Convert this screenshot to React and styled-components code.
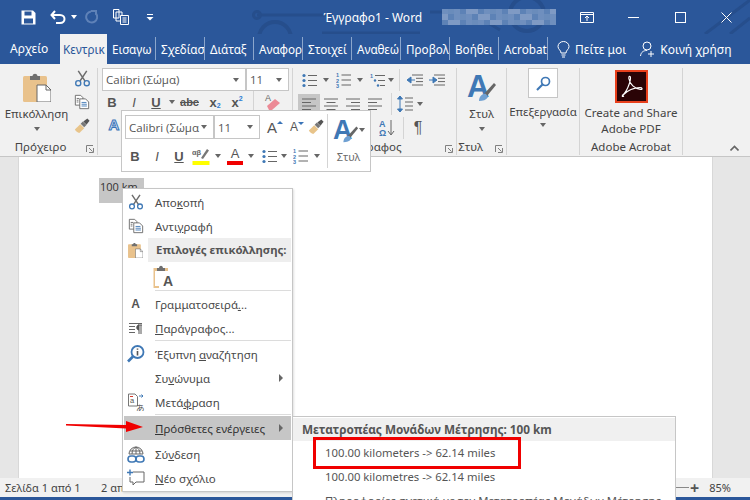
import styled, { createGlobalStyle } from 'styled-components';

const ui = `"Noto Sans", "Open Sans", "Liberation Sans", sans-serif`;
const calibri = `"Open Sans", "Liberation Sans", sans-serif`;

const Global = createGlobalStyle`
  html, body { margin: 0; padding: 0; background: #e6e6e6; }
  * { box-sizing: border-box; }
`;

const Window = styled.div`
  position: relative;
  width: 750px;
  height: 500px;
  overflow: hidden;
  display: flex;
  flex-direction: column;
  font-family: ${ui};
  font-size: 11.5px;
  color: #444;
  background: #e6e6e6;
`;

/* title bar */
const TitleBar = styled.div`
  position: relative;
  height: 34px;
  flex: none;
  display: flex;
  align-items: center;
  background: #2b579a;
  color: #fff;
`;
const QuickAccess = styled.div`
  display: flex;
  align-items: center;
  padding-left: 20px;
  width: 324px;
  position: relative;
`;
const QuickBtn = styled.span`
  display: flex;
  align-items: center;
  justify-content: center;
  width: ${p => p.$w}px;
  margin-left: ${p => p.$ml || 0}px;
`;
const DocTitle = styled.div`
  position: relative;
  width: 119px;
  font-size: 12px;
  white-space: nowrap;
`;
const Mosaic = styled.div`
  position: relative;
  display: grid;
  grid-template-columns: repeat(19, 6px);
  grid-auto-rows: 5.4px;
  width: 117px;
`;
const MosaicCell = styled.span`
  background: ${p => p.$c};
`;
const WindowButtons = styled.div`
  position: relative;
  margin-left: 5px;
  display: flex;
  align-items: center;
`;
const WinBtn = styled.span`
  width: 46.5px;
  display: flex;
  justify-content: center;
`;
const Circuit = styled.svg`
  position: absolute;
  left: 0;
  top: 0;
`;

/* tabs */
const TabBar = styled.div`
  position: relative;
  height: 30px;
  flex: none;
  display: flex;
  align-items: stretch;
  background: #2b579a;
`;
const FileTab = styled.div`
  width: 60px;
  padding-left: 10px;
  line-height: 30px;
  color: #fff;
  font-size: 12px;
`;
const Tab = styled.div`
  width: ${p => (p.$active ? 47 : 49)}px;
  padding-left: ${p => (p.$active ? 3 : 5)}px;
  white-space: nowrap;
  line-height: 30px;
  font-size: 11.7px;
  color: ${p => (p.$active ? '#2b579a' : '#fff')};
  background: ${p => (p.$active ? '#f1f1f1' : 'transparent')};
  position: relative;
  &::after {
    content: '';
    display: ${p => (p.$active ? 'none' : 'block')};
    position: absolute;
    right: 0;
    top: 3px;
    bottom: 4px;
    width: 1px;
    background: #8ba6cc;
  }
`;
const TellMe = styled.div`
  display: flex;
  align-items: center;
  gap: 5px;
  color: #fff;
  font-size: 12px;
  padding-left: ${p => p.$pl}px;
  white-space: nowrap;
`;

/* ribbon */
const Ribbon = styled.div`
  height: 93px;
  flex: none;
  display: flex;
  background: #f1f1f1;
  border-bottom: 1px solid #c6c6c6;
  padding-top: 4px;
`;
const Group = styled.div`
  position: relative;
  width: ${p => p.$w}px;
  flex: none;
  display: flex;
  flex-direction: column;
  border-right: ${p => (p.$plain ? 'none' : '1px solid #d4d4d4')};
  margin-bottom: 1px;
`;
const GroupBody = styled.div`
  height: 71px;
  display: flex;
  padding-left: ${p => p.$pl || 0}px;
`;
const GroupLabel = styled.div`
  position: relative;
  height: 16px;
  line-height: 16px;
  text-align: ${p => p.$align || 'center'};
  font-size: 11.5px;
  color: #444;
  padding-right: ${p => p.$pr || 0}px;
`;
const Launcher = styled.svg`
  position: absolute;
  right: 3px;
  top: 6px;
`;
const BigButton = styled.div`
  width: ${p => p.$w}px;
  display: flex;
  flex-direction: column;
  align-items: center;
  text-align: center;
  font-size: 11.5px;
  line-height: 16px;
  white-space: nowrap;
`;
const IconSlot = styled.div`
  height: ${p => p.$h}px;
  margin-top: ${p => p.$mt || 0}px;
  display: flex;
  align-items: center;
  justify-content: center;
`;
const Stack = styled.div`
  display: flex;
  flex-direction: column;
  margin: ${p => p.$m || 0};
`;
const Row = styled.div`
  display: flex;
  align-items: center;
  height: ${p => p.$h || 22}px;
  margin-top: ${p => p.$mt || 0}px;
`;
const Btn = styled.span`
  width: ${p => p.$w || 22}px;
  height: ${p => p.$h || 20}px;
  flex: none;
  display: flex;
  align-items: center;
  justify-content: center;
  background: ${p => (p.$on ? '#c6c6c6' : 'transparent')};
  margin-left: ${p => p.$ml || 0}px;
`;
const Fmt = styled.span`
  font-family: "Liberation Sans", sans-serif;
  font-size: ${p => p.$size || 13}px;
  font-weight: ${p => (p.$italic || p.$light ? 400 : 700)};
  font-style: ${p => (p.$italic ? 'italic' : 'normal')};
  text-decoration: ${p => (p.$under ? 'underline' : p.$strike ? 'line-through' : 'none')};
  color: #555;
`;
const Script = styled.span`
  font-size: 7px;
  color: #2b7cd3;
  font-weight: 700;
  margin-top: ${p => (p.$sup ? -7 : 7)}px;
  font-family: "Liberation Sans", sans-serif;
`;
const Caret = styled.span`
  display: inline-block;
  flex: none;
  width: 0;
  height: 0;
  border-left: 3.5px solid transparent;
  border-right: 3.5px solid transparent;
  border-top: 4px solid ${p => p.$color || '#666'};
  margin-left: ${p => p.$ml || 0}px;
`;
const VRule = styled.span`
  width: 1px;
  height: ${p => p.$h || 22}px;
  background: #d4d4d4;
  flex: none;
  margin: 0 ${p => p.$m || 4}px;
`;
const Combo = styled.div`
  width: ${p => p.$w}px;
  height: ${p => p.$h || 23}px;
  flex: none;
  background: #fff;
  border: 1px solid #c6c6c6;
  display: flex;
  align-items: center;
  justify-content: space-between;
  padding: 0 6px 0 3px;
  font-family: ${calibri};
  font-size: 11.5px;
  color: #555;
  white-space: nowrap;
  overflow: hidden;
  margin-left: ${p => p.$ml || 0}px;
`;
const SearchBox = styled.div`
  width: 30px;
  height: 30px;
  background: #fff;
  border: 1px solid #c6c6c6;
  display: flex;
  align-items: center;
  justify-content: center;
`;
const OutlineA = styled.span`
  font-family: "Liberation Sans", sans-serif;
  font-weight: 700;
  font-size: 15px;
  color: #d8e6f5;
  -webkit-text-stroke: 1px #3a74b8;
`;
const GrowA = styled.span`
  position: relative;
  font-family: "Liberation Sans", sans-serif;
  font-size: ${p => p.$s}px;
  color: #555;
  &::after {
    content: '';
    position: absolute;
    right: -6px;
    top: 2px;
    border-left: 3px solid transparent;
    border-right: 3px solid transparent;
    ${p => (p.$down ? 'border-top: 3px solid #3a74b8;' : 'border-bottom: 3px solid #3a74b8;')}
  }
`;
const ColorA = styled.span`
  display: flex;
  flex-direction: column;
  align-items: center;
  width: 16px;
  font-family: "Liberation Sans", sans-serif;
  font-size: 13px;
  line-height: 12px;
  color: #555;
  &::after {
    content: '';
    width: 16px;
    height: 4px;
    margin-top: 1px;
    background: ${p => p.$bar};
  }
`;

/* document */
const DocArea = styled.div`
  flex: 1;
  display: flex;
  padding: 0 37px 0 18px;
`;
const Page = styled.div`
  flex: 1;
  background: #fff;
  border-left: 1px solid #d8d8d8;
  border-right: 1px solid #d8d8d8;
  padding: 21px 0 0 80px;
`;
const Selected = styled.span`
  display: inline-block;
  width: 45px;
  height: 25px;
  background: #c6c6c6;
  padding-left: 1px;
  font-family: ${calibri};
  font-size: 11px;
  color: #333;
  line-height: 18px;
  white-space: nowrap;
`;
const StatusBar = styled.div`
  height: 22px;
  flex: none;
  background: #f1f1f1;
  border-bottom: 3px solid #2b579a;
  display: flex;
  align-items: center;
  font-size: 11px;
  color: #444;
  padding-left: 5px;
`;
const StatusItem = styled.span`
  width: ${p => p.$w}px;
  white-space: nowrap;
`;
const ZoomSlider = styled.div`
  margin-left: auto;
  display: flex;
  align-items: center;
  padding-right: 19px;
`;
const ZoomTrack = styled.span`
  width: 16px;
  height: 1px;
  background: #888;
`;
const ZoomPlus = styled.span`
  font-size: 16px;
  line-height: 16px;
  color: #555;
  margin: 0 10px 0 1px;
  font-weight: 700;
`;

/* mini toolbar */
const MiniToolbar = styled.div`
  position: absolute;
  left: 121px;
  top: 110px;
  width: 250px;
  height: 62px;
  background: #fff;
  border: 1px solid #c6c6c6;
  display: flex;
  padding: 4px 0 0 3px;
`;
const MiniRows = styled.div`
  width: 202px;
  display: flex;
  flex-direction: column;
`;
const MiniStyle = styled.div`
  flex: none;
  width: 42px;
  margin-top: -1px;
  border-left: 1px solid #d4d4d4;
  height: 54px;
  display: flex;
  flex-direction: column;
  align-items: center;
  font-size: 11px;
  color: #6b6b6b;
`;

/* context menu */
const ContextMenu = styled.div`
  position: absolute;
  left: 122px;
  top: 188px;
  width: 171px;
  height: 304px;
  background: #fff;
  border: 1px solid #c6c6c6;
  padding: 1px;
  box-shadow: 1px 1px 2px rgba(0, 0, 0, 0.12);
`;
const MenuRow = styled.div`
  position: relative;
  height: ${p => p.$h || 24}px;
  display: flex;
  align-items: center;
  font-size: 11.5px;
  white-space: nowrap;
  background: ${p => (p.$hover ? '#c6c6c6' : 'transparent')};
  color: ${p => (p.$hover ? '#333' : '#4a4a4a')};
`;
const MenuIcon = styled.span`
  width: 31px;
  flex: none;
  padding-right: 8px;
  display: flex;
  justify-content: center;
  align-items: center;
`;
const MenuText = styled.span`
  display: block;
`;
const MenuHeader = styled.div`
  flex: 1;
  align-self: stretch;
  margin-left: -7px;
  padding-left: 8px;
  background: #eeeeee;
  font-weight: 700;
  font-size: 11.4px;
  line-height: 24px;
  color: #555;
  white-space: nowrap;
  overflow: hidden;
`;
const MenuSep = styled.div`
  height: 2px;
  margin-left: 31px;
  border-top: 1px solid ${p => (p.$none ? 'transparent' : '#dcdcdc')};
`;
const SubArrow = styled.span`
  position: absolute;
  right: 8px;
  top: 50%;
  margin-top: -4px;
  border-top: 4px solid transparent;
  border-bottom: 4px solid transparent;
  border-left: 4px solid #666;
`;
const SubMenu = styled.div`
  position: absolute;
  left: 292px;
  top: 416px;
  width: 384px;
  height: 100px;
  background: #fff;
  border: 1px solid #c6c6c6;
  padding-top: 1px;
`;
const SubHeader = styled.div`
  height: 23px;
  background: #f0f0f0;
  padding-left: 9px;
  line-height: 23px;
  font-weight: 700;
  font-size: 11.75px;
  color: #555;
`;
const SubItem = styled.div`
  height: 24px;
  padding-left: 32px;
  line-height: 24px;
  font-size: 11.3px;
  color: #555;
  white-space: nowrap;
`;
const RedBox = styled.div`
  position: absolute;
  left: 313px;
  top: 437px;
  width: 208px;
  height: 32px;
  border: 3px solid #f00000;
`;
const RedArrow = styled.svg`
  position: absolute;
  left: 64px;
  top: 418px;
`;

/* icons */
const Scissors = ({ s = 20 }) => (
  <svg width={s} height={s} viewBox="0 0 20 20" fill="none">
    <path d="M5 1 L13 13 M15 1 L7 13" stroke="#6d6d6d" strokeWidth="1.8" />
    <circle cx="5" cy="15.5" r="3" stroke="#3f78b5" strokeWidth="1.6" />
    <circle cx="15" cy="15.5" r="3" stroke="#3f78b5" strokeWidth="1.6" />
  </svg>
);
const CopyIcon = ({ s = 18 }) => (
  <svg width={s} height={s} viewBox="0 0 18 18" fill="#fff" stroke="#666" strokeWidth="1">
    <path d="M1.5 1.5 H7.5 L10 4 V12.5 H1.5 Z" />
    <path d="M6.5 5.5 H13 L16.5 9 V16.5 H6.5 Z" />
    <path d="M8.5 9.5 H14 M8.5 11.5 H14.5 M8.5 13.5 H14.5" stroke="#3f78b5" />
    <path d="M3 5 H6 M3 7 H5 M3 9 H5" />
  </svg>
);
const Painter = ({ s = 18 }) => (
  <svg width={s} height={s} viewBox="0 0 18 18">
    <path d="M1 13 L7 7 L11.5 11.5 L6 17 C4 16.5 2 15 1 13 Z" fill="#e8c48a" />
    <path d="M7.5 6.5 L10 4 L14 8 L11.5 10.5 Z" fill="#777" />
    <path d="M10.5 4 L15 0.5 L17.5 3 L14 7.5 Z" fill="#555" />
  </svg>
);
const PasteIcon = ({ w = 28, h = 30 }) => (
  <svg width={w} height={h} viewBox="0 0 28 30">
    <rect x="0" y="4" width="24" height="26" rx="1.5" fill="#e9c28c" />
    <path d="M7 4 H9.5 C10 1 14 1 14.5 4 H17 V8 H7 Z" fill="#6f6f6f" />
    <path d="M14 13 H23 L28 18 V30 H14 Z" fill="#fff" stroke="#666" />
    <path d="M23 13 V18 H28" fill="none" stroke="#666" />
  </svg>
);
const BulletIcon = () => (
  <svg width="15" height="15" viewBox="0 0 15 15">
    <circle cx="2" cy="2.5" r="1.6" fill="#3f78b5" />
    <circle cx="2" cy="7.5" r="1.6" fill="#3f78b5" />
    <circle cx="2" cy="12.5" r="1.6" fill="#3f78b5" />
    <path d="M6 2.5 H15 M6 7.5 H15 M6 12.5 H15" stroke="#666" strokeWidth="1.1" />
  </svg>
);
const NumberIcon = () => (
  <svg width="15" height="16" viewBox="0 0 15 16">
    <text x="0" y="5" fontSize="5.5" fontWeight="700" fill="#3f78b5" fontFamily="Liberation Sans">1</text>
    <text x="0" y="10.5" fontSize="5.5" fontWeight="700" fill="#3f78b5" fontFamily="Liberation Sans">2</text>
    <text x="0" y="16" fontSize="5.5" fontWeight="700" fill="#3f78b5" fontFamily="Liberation Sans">3</text>
    <path d="M5.5 3 H15 M5.5 8 H15 M5.5 13 H15" stroke="#666" strokeWidth="1.1" />
  </svg>
);
const MultiIcon = () => (
  <svg width="15" height="15" viewBox="0 0 15 15">
    <text x="0" y="5" fontSize="5.5" fontWeight="700" fill="#3f78b5" fontFamily="Liberation Sans">1</text>
    <path d="M5 2.5 H15 M8 7.5 H15 M10 12.5 H15" stroke="#666" strokeWidth="1.1" />
    <circle cx="5" cy="7.5" r="1.2" fill="#3f78b5" />
    <circle cx="8" cy="12.5" r="1.2" fill="#3f78b5" />
  </svg>
);
const IndentIcon = ({ flip }) => (
  <svg width="16" height="12" viewBox="0 0 16 12">
    <path d="M5 1 H16 M9 4.3 H16 M9 7.6 H16 M5 11 H16" stroke="#666" />
    {flip ? (
      <path d="M0 6 H4 V3 L8 6 L4 9 V6" fill="#3f78b5" stroke="#3f78b5" />
    ) : (
      <path d="M8 6 H4 V3 L0 6 L4 9 V6" fill="#3f78b5" stroke="#3f78b5" />
    )}
  </svg>
);
const AlignIcon = ({ type }) => {
  const d = {
    left: 'M1 2 H15 M1 5.5 H10 M1 9 H15 M1 12.5 H10',
    center: 'M1 2 H15 M3.5 5.5 H12.5 M1 9 H15 M3.5 12.5 H12.5',
    right: 'M1 2 H15 M6 5.5 H15 M1 9 H15 M6 12.5 H15',
  }[type];
  return (
    <svg width="16" height="14" viewBox="0 0 16 14">
      <path d={d} stroke="#666" />
    </svg>
  );
};
const LineSpacing = () => (
  <svg width="16" height="18" viewBox="0 0 16 18">
    <path d="M3 1 V17 M3 1 L0.5 4 H5.5 Z M3 17 L0.5 14 H5.5 Z" stroke="#3f78b5" fill="#3f78b5" />
    <path d="M8 3 H16 M8 7 H16 M8 11 H16 M8 15 H16" stroke="#666" />
  </svg>
);
const SortIcon = () => (
  <svg width="17" height="17" viewBox="0 0 17 17">
    <text x="0" y="8" fontSize="9" fontWeight="700" fill="#3f78b5" fontFamily="Liberation Sans">A</text>
    <text x="0" y="16.5" fontSize="9" fontWeight="700" fill="#3f78b5" fontFamily="Liberation Sans">Ω</text>
    <path d="M12 1 V15 M9 12 L12 16 L15 12" stroke="#666" fill="none" />
  </svg>
);
const Eraser = () => (
  <svg width="18" height="18" viewBox="0 0 18 18">
    <text x="1" y="8" fontSize="9" fill="#666" fontFamily="Liberation Sans">A</text>
    <path d="M3 13 L11 6 L16 10 L8 17 H5 Z" fill="#ec8a96" />
  </svg>
);
const StylesA = ({ s = 30 }) => (
  <svg width={s} height={s} viewBox="0 0 30 30">
    <text x="0" y="25" fontSize="31" fontWeight="700" fill="#3f78b5" fontFamily="Liberation Sans">A</text>
    <path d="M17 22 L27 11 L29 13 L20 24 Z" fill="#666" />
    <path d="M12 29 C12 24 16 21 19 22 L21 25 C19 28 16 29 12 29 Z" fill="#6fa0d2" />
  </svg>
);
const HighlightIcon = () => (
  <svg width="18" height="18" viewBox="0 0 18 18">
    <text x="0" y="8" fontSize="7.5" fontWeight="700" fill="#666" fontFamily="Liberation Sans">αβ</text>
    <path d="M9 11 L15 2 L17 3.5 L11 12 Z" fill="#777" />
    <rect x="0.5" y="14" width="17" height="4" fill="#ffff00" />
  </svg>
);
const Magnifier = () => (
  <svg width="15" height="15" viewBox="0 0 15 15" fill="none">
    <circle cx="9.5" cy="5.5" r="4" stroke="#3f78b5" strokeWidth="1.7" />
    <path d="M6.5 8.5 L1 14" stroke="#3f78b5" strokeWidth="2.2" />
  </svg>
);
const AcrobatLogo = () => (
  <svg width="33" height="33" viewBox="0 0 33 33">
    <rect x="1" y="1" width="31" height="31" fill="#2a0406" stroke="#e8401c" strokeWidth="2" />
    <path
      d="M7 25.5 C11 23 15.5 13 15.5 8 C15.5 5.5 13.5 6 13.8 8.5 C14.5 14 20 19 25.5 19.5 C28 19.7 27.5 17.6 25 17.6 C19 17.6 12 21 8 25 C6.5 26.5 7.5 27 9 26"
      fill="none"
      stroke="#fff"
      strokeWidth="1.1"
    />
  </svg>
);
const LauncherIcon = () => (
  <Launcher width="8" height="8" viewBox="0 0 8 8">
    <path d="M0.5 0.5 H7 M0.5 0.5 V7 M7.5 3 V7.5 H3 M3 3 L6.5 6.5" stroke="#808080" fill="none" />
  </Launcher>
);
const SmartIcon = () => (
  <svg width="18" height="18" viewBox="0 0 18 18" fill="none">
    <circle cx="10.5" cy="7" r="6" stroke="#3f78b5" strokeWidth="1.8" />
    <path d="M6 11.5 L1 16.5" stroke="#3f78b5" strokeWidth="2.6" />
    <path d="M10.5 3.5 V4.8 M10.5 6 V10.5" stroke="#555" strokeWidth="1.6" />
  </svg>
);
const TranslateIcon = () => (
  <svg width="18" height="18" viewBox="0 0 18 18" fill="none">
    <path d="M1.5 1 H8 L10.5 3.5 V13 H1.5 Z" stroke="#777" fill="#fff" />
    <text x="3" y="10" fontSize="7.5" fill="#555" fontFamily="Liberation Sans">a</text>
    <path d="M3 3.5 H6" stroke="#d83b2d" />
    <path d="M12 3 H16 L14.5 1.5 M16 3 L14.5 4.5" stroke="#3f78b5" />
    <text x="9" y="17.5" fontSize="8.5" fill="#555" fontFamily="Noto Sans CJK JP">あ</text>
  </svg>
);
const ParaIcon = () => (
  <svg width="14" height="13" viewBox="0 0 14 13">
    <path d="M0 1.5 H13 M0 4.5 H6 M0 7.5 H6 M0 10.5 H6" stroke="#666" />
    <path d="M9 3 H13 M10 3 V12 M12 3 V12 M10 3 C7 3 7 8 10 8" stroke="#555" fill="#555" />
  </svg>
);
const LinkIcon = () => (
  <svg width="18" height="19" viewBox="0 0 18 19" fill="none">
    <path d="M2 9 A7 7 0 0 1 16 9 Z M9 2 V9 M5 9 C5 5 7 3 9 2 C11 3 13 5 13 9 M3 6 H15" stroke="#666" />
    <rect x="1" y="11" width="8" height="6" rx="3" stroke="#3f78b5" strokeWidth="1.6" />
    <rect x="9" y="11" width="8" height="6" rx="3" stroke="#3f78b5" strokeWidth="1.6" />
  </svg>
);
const CommentIcon = () => (
  <svg width="18" height="18" viewBox="0 0 18 18" fill="none">
    <path d="M6 3 H17 V13 H9 L6 16 V13 H3 V8" stroke="#666" />
    <path d="M0 3.5 H6 M3 0.5 V6.5" stroke="#3f78b5" strokeWidth="1.4" />
  </svg>
);

// the window is narrow, so Word cuts the tab names short
const tabs = ['Εισαγω', 'Σχεδίασ', 'Διάταξ', 'Αναφορ', 'Στοιχεί', 'Αναθεώ', 'Προβολ', 'Βοήθει', 'Acrobat'];
const mosaicColors = ['#6f8fbe', '#8aa3cb', '#5d82b6', '#7f9ac4', '#6a8cbb', '#94abd0', '#4f78b0'];
const mosaic = Array.from({ length: 57 }, (_, i) => mosaicColors[(i * i * 3 + i) % 7]);

const App = () => {
  return (
    <Window>
      <Global />
      <TitleBar>
        <Circuit width="750" height="34" viewBox="0 0 750 34" fill="none" stroke="#264e8c" strokeWidth="3">
          <path d="M257 15 H330 M322 33 H420 M430 12 H470 L500 30" />
          <circle cx="257" cy="15" r="3.5" />
          <circle cx="275" cy="38" r="16" strokeWidth="4" />
          <circle cx="527" cy="14" r="17" strokeWidth="4" />
          <path d="M705 34 L750 0 M730 34 L750 18" />
        </Circuit>
        <QuickAccess>
          <QuickBtn $w={15} $ml={1}>
            <svg width="15" height="15" viewBox="0 0 15 15">
              <path d="M0.5 0.5 H12 L14.5 3 V14.5 H0.5 Z" fill="#fff" />
              <rect x="3.5" y="1.5" width="7" height="4" fill="#2b579a" />
              <rect x="3" y="8.5" width="9" height="5" fill="#2b579a" />
            </svg>
          </QuickBtn>
          <QuickBtn $w={16} $ml={14}>
            <svg width="16" height="14" viewBox="0 0 16 14" fill="none" stroke="#fff" strokeWidth="2">
              <path d="M1.5 5 H10 C16 5 16 13 10 13 H6 M5 1 L1.5 5 L5 9" />
            </svg>
          </QuickBtn>
          <Caret $ml={5} $color="#fff" />
          <QuickBtn $w={14} $ml={7}>
            <svg width="14" height="14" viewBox="0 0 14 14" fill="none" stroke="#5f82b8" strokeWidth="2">
              <path d="M11.5 3 A5.5 5.5 0 1 1 7 1.5 M7 1 H12 V5" />
            </svg>
          </QuickBtn>
          <QuickBtn $w={16} $ml={15}>
            <svg width="16" height="16" viewBox="0 0 16 16" fill="none" stroke="#fff">
              <path d="M0.5 0.5 H6 V9 H0.5 Z M3 3 H9 V12 H3 Z" />
              <path d="M7.5 6.5 H15.5 V15.5 H7.5 Z" fill="#2b579a" />
              <path d="M9.5 9 H13.5 M9.5 11 H13.5 M9.5 13 H13.5" />
            </svg>
          </QuickBtn>
          <QuickBtn $w={8} $ml={17}>
            <svg width="8" height="7" viewBox="0 0 8 7" fill="#fff">
              <rect x="1" y="0" width="6" height="1" />
              <path d="M0.5 3 H7.5 L4 6.5 Z" />
            </svg>
          </QuickBtn>
        </QuickAccess>
        <DocTitle>Έγγραφο1 - Word</DocTitle>
        <Mosaic>
          {mosaic.map((c, i) => (
            <MosaicCell key={i} $c={c} />
          ))}
        </Mosaic>
        <WindowButtons>
          <WinBtn>
            <svg width="14" height="11" viewBox="0 0 14 11" fill="none" stroke="#fff">
              <path d="M0.5 0.5 H13.5 V10.5 H0.5 Z M0.5 2.5 H13.5 M7 9 V4 M5 6 L7 4 L9 6" />
            </svg>
          </WinBtn>
          <WinBtn>
            <svg width="11" height="11" viewBox="0 0 11 11" stroke="#fff">
              <path d="M0 5.5 H11" />
            </svg>
          </WinBtn>
          <WinBtn>
            <svg width="11" height="11" viewBox="0 0 11 11" fill="none" stroke="#fff">
              <rect x="0.5" y="0.5" width="10" height="10" />
            </svg>
          </WinBtn>
          <WinBtn>
            <svg width="11" height="11" viewBox="0 0 11 11" stroke="#fff">
              <path d="M0.5 0.5 L10.5 10.5 M10.5 0.5 L0.5 10.5" />
            </svg>
          </WinBtn>
        </WindowButtons>
      </TitleBar>

      <TabBar>
        <FileTab>Αρχείο</FileTab>
        <Tab $active>Κεντρικ</Tab>
        {tabs.map(t => (
          <Tab key={t}>{t}</Tab>
        ))}
        <TellMe $pl={9}>
          <svg width="13" height="17" viewBox="0 0 13 17" fill="none" stroke="#fff">
            <path d="M4 12 C4 9 1 8.5 1 5.5 A5.5 5 0 0 1 12 5.5 C12 8.5 9 9 9 12 Z M4.5 14 H8.5 M5 16 H8" />
          </svg>
          Πείτε μοι
        </TellMe>
        <TellMe $pl={14}>
          <svg width="15" height="17" viewBox="0 0 15 17" fill="none" stroke="#fff">
            <circle cx="7" cy="5" r="4" />
            <path d="M0.5 15 C1 11 3.5 9.5 7 9.5 M11 10 V16 M8 13 H14" />
          </svg>
          Κοινή χρήση
        </TellMe>
      </TabBar>

      <Ribbon>
        <Group $w={98}>
          <GroupBody>
            <BigButton $w={73}>
              <IconSlot $h={38}>
                <PasteIcon />
              </IconSlot>
              Επικόλληση
              <IconSlot $h={14}>
                <Caret />
              </IconSlot>
            </BigButton>
            <Stack $m="-2px 0 0 -2px">
              <Btn $h={24}>
                <Scissors s={17} />
              </Btn>
              <Btn $h={24}>
                <CopyIcon s={16} />
              </Btn>
              <Btn $h={24}>
                <Painter s={16} />
              </Btn>
            </Stack>
          </GroupBody>
          <GroupLabel $pr={16}>
            Πρόχειρο
            <LauncherIcon />
          </GroupLabel>
        </Group>

        <Group $w={195}>
          <GroupBody $pl={4}>
            <Stack>
              <Row $h={23}>
                <Combo $w={144}>
                  Calibri (Σώμα)
                  <Caret />
                </Combo>
                <Combo $w={43}>
                  11
                  <Caret />
                </Combo>
              </Row>
              <Row>
                <Btn $ml={-1}>
                  <Fmt>B</Fmt>
                </Btn>
                <Btn>
                  <Fmt $italic>I</Fmt>
                </Btn>
                <Btn>
                  <Fmt $under>U</Fmt>
                </Btn>
                <Caret $ml={2} />
                <Btn $w={29}>
                  <Fmt $strike $size={11}>
                    abc
                  </Fmt>
                </Btn>
                <Btn>
                  <Fmt>x</Fmt>
                  <Script>2</Script>
                </Btn>
                <Btn>
                  <Fmt>x</Fmt>
                  <Script $sup>2</Script>
                </Btn>
                <VRule $m={5} />
                <Btn $ml={3}>
                  <Eraser />
                </Btn>
              </Row>
              <Row>
                <Btn $ml={1}>
                  <OutlineA>A</OutlineA>
                </Btn>
              </Row>
            </Stack>
          </GroupBody>
          <GroupLabel />
        </Group>

        <Group $w={164}>
          <GroupBody $pl={5}>
            <Stack>
              <Row $h={24}>
                <Btn>
                  <BulletIcon />
                </Btn>
                <Caret $ml={3} />
                <Btn $ml={3}>
                  <NumberIcon />
                </Btn>
                <Caret $ml={3} />
                <Btn $ml={3}>
                  <MultiIcon />
                </Btn>
                <Caret />
                <VRule $m={5} />
                <Btn $w={20}>
                  <IndentIcon />
                </Btn>
                <Btn $w={20} $ml={2}>
                  <IndentIcon flip />
                </Btn>
              </Row>
              <Row $h={24}>
                <Btn $on>
                  <AlignIcon type="left" />
                </Btn>
                <Btn>
                  <AlignIcon type="center" />
                </Btn>
                <Btn>
                  <AlignIcon type="right" />
                </Btn>
                <Btn>
                  <AlignIcon type="left" />
                </Btn>
                <VRule $m={5} />
                <Btn $w={16}>
                  <LineSpacing />
                </Btn>
                <Caret $ml={4} />
              </Row>
              <Row $h={23}>
                <Btn $w={22} $ml={78}>
                  <SortIcon />
                </Btn>
                <VRule $m={5} />
                <Btn $w={18}>
                  <Fmt $light $size={16}>
                    ¶
                  </Fmt>
                </Btn>
              </Row>
            </Stack>
          </GroupBody>
          <GroupLabel $pr={16}>
            Παράγραφος
            <LauncherIcon />
          </GroupLabel>
        </Group>

        <Group $w={50}>
          <GroupBody>
            <BigButton $w={50}>
              <IconSlot $h={38}>
                <StylesA />
              </IconSlot>
              Στυλ
              <IconSlot $h={14}>
                <Caret />
              </IconSlot>
            </BigButton>
          </GroupBody>
          <GroupLabel $pr={22}>
            Στυλ
            <LauncherIcon />
          </GroupLabel>
        </Group>

        <Group $w={73}>
          <GroupBody>
            <BigButton $w={73}>
              <SearchBox>
                <Magnifier />
              </SearchBox>
              <IconSlot $h={19} $mt={4}>
                Επεξεργασία
              </IconSlot>
              <IconSlot $h={8}>
                <Caret />
              </IconSlot>
            </BigButton>
          </GroupBody>
          <GroupLabel />
        </Group>

        <Group $w={103}>
          <GroupBody>
            <BigButton $w={103}>
              <IconSlot $h={37}>
                <AcrobatLogo />
              </IconSlot>
              <span>
                Create and Share
                <br />
                Adobe PDF
              </span>
            </BigButton>
          </GroupBody>
          <GroupLabel>Adobe Acrobat</GroupLabel>
        </Group>

        <Group $w={67} $plain>
          <GroupBody />
          <GroupLabel $align="right" $pr={11}>
            <svg width="9" height="6" viewBox="0 0 9 6" fill="none" stroke="#666" strokeWidth="1.6">
              <path d="M0.5 5.5 L4.5 1.5 L8.5 5.5" />
            </svg>
          </GroupLabel>
        </Group>
      </Ribbon>

      <DocArea>
        <Page>
          <Selected>100 km</Selected>
        </Page>
      </DocArea>

      <StatusBar>
        <StatusItem $w={96}>Σελίδα 1 από 1</StatusItem>
        <StatusItem $w={20}>2 απ</StatusItem>
        <ZoomSlider>
          <ZoomTrack />
          <ZoomPlus>+</ZoomPlus>
          85%
        </ZoomSlider>
      </StatusBar>

      <MiniToolbar>
        <MiniRows>
          <Row $h={24}>
            <Combo $w={89} $h={24}>
              Calibri (Σώμα
              <Caret />
            </Combo>
            <Combo $w={46} $h={24}>
              11
              <Caret />
            </Combo>
            <Btn $ml={1}>
              <GrowA $s={15}>A</GrowA>
            </Btn>
            <Btn>
              <GrowA $s={12} $down>
                A
              </GrowA>
            </Btn>
            <Btn>
              <Painter s={16} />
            </Btn>
          </Row>
          <Row $h={26} $mt={4}>
            <Btn $ml={-1}>
              <Fmt>B</Fmt>
            </Btn>
            <Btn>
              <Fmt $italic>I</Fmt>
            </Btn>
            <Btn>
              <Fmt $under>U</Fmt>
            </Btn>
            <Btn>
              <HighlightIcon />
            </Btn>
            <Caret $ml={3} />
            <Btn $ml={3}>
              <ColorA $bar="#f00000">A</ColorA>
            </Btn>
            <Caret $ml={2} />
            <Btn $ml={4}>
              <BulletIcon />
            </Btn>
            <Caret $ml={1} />
            <Btn $ml={2}>
              <NumberIcon />
            </Btn>
            <Caret $ml={3} />
          </Row>
        </MiniRows>
        <MiniStyle>
          <IconSlot $h={32}>
            <StylesA s={26} />
            <Caret />
          </IconSlot>
          <IconSlot $h={20}>Στυλ</IconSlot>
        </MiniStyle>
      </MiniToolbar>

      <ContextMenu>
        <MenuRow>
          <MenuIcon>
            <Scissors s={16} />
          </MenuIcon>
          <MenuText>
            Απο<u>κ</u>οπή
          </MenuText>
        </MenuRow>
        <MenuRow>
          <MenuIcon>
            <CopyIcon s={16} />
          </MenuIcon>
          <MenuText>
            Αντι<u>γ</u>ραφή
          </MenuText>
        </MenuRow>
        <MenuRow>
          <MenuIcon>
            <PasteIcon w={15} h={16} />
          </MenuIcon>
          <MenuHeader>Επιλογές επικόλλησης:</MenuHeader>
        </MenuRow>
        <MenuRow $h={28}>
          <MenuIcon />
          <svg width="21" height="23" viewBox="0 0 21 23" style={{ marginLeft: -2 }}>
            <path d="M0.5 3 H15 V6 H2 V23 H0.5 Z M2 21 H6 V23 H2 Z" fill="#e9c28c" />
            <path d="M4 3 H6 C6.5 0 9.5 0 10 3 H12 V6 H4 Z" fill="#6f6f6f" />
            <text x="10" y="21" fontSize="14" fontWeight="700" fill="#555" fontFamily="Liberation Sans">A</text>
          </svg>
        </MenuRow>
        <MenuSep />
        <MenuRow>
          <MenuIcon>
            <Fmt $size={12}>A</Fmt>
          </MenuIcon>
          <MenuText>
            Γραμματοσειρά<u>.</u>..
          </MenuText>
        </MenuRow>
        <MenuRow>
          <MenuIcon>
            <ParaIcon />
          </MenuIcon>
          <MenuText>
            <u>Π</u>αράγραφος...
          </MenuText>
        </MenuRow>
        <MenuSep />
        <MenuRow>
          <MenuIcon>
            <SmartIcon />
          </MenuIcon>
          <MenuText>
            Έξυπνη <u>α</u>ναζήτηση
          </MenuText>
        </MenuRow>
        <MenuRow>
          <MenuIcon />
          <MenuText>
            Συ<u>ν</u>ώνυμα
          </MenuText>
          <SubArrow />
        </MenuRow>
        <MenuRow>
          <MenuIcon>
            <TranslateIcon />
          </MenuIcon>
          <MenuText>
            Μετά<u>φ</u>ραση
          </MenuText>
        </MenuRow>
        <MenuSep />
        <MenuRow $hover>
          <MenuIcon />
          <MenuText>
            <u>Π</u>ρόσθετες ενέργειες
          </MenuText>
          <SubArrow />
        </MenuRow>
        <MenuSep $none />
        <MenuRow>
          <MenuIcon>
            <LinkIcon />
          </MenuIcon>
          <MenuText>
            Σύ<u>ν</u>δεση
          </MenuText>
        </MenuRow>
        <MenuRow>
          <MenuIcon>
            <CommentIcon />
          </MenuIcon>
          <MenuText>
            <u>Ν</u>έο σχόλιο
          </MenuText>
        </MenuRow>
      </ContextMenu>

      <SubMenu>
        <SubHeader>Μετατροπέας Μονάδων Μέτρησης: 100 km</SubHeader>
        <SubItem>100.00 kilometers -&gt; 62.14 miles</SubItem>
        <SubItem>100.00 kilometres -&gt; 62.14 miles</SubItem>
        <SubItem>Πληροφορίες σχετικά με τον Μετατροπέας Μονάδων Μέτρησης</SubItem>
      </SubMenu>

      <RedBox />
      <RedArrow width="80" height="16" viewBox="0 0 80 16">
        <path d="M2 6 L62 7 L62 3 L79 9 L62 14 L62 10.5 L2 7.5 Z" fill="#f00000" />
      </RedArrow>
    </Window>
  );
};

export default App;
